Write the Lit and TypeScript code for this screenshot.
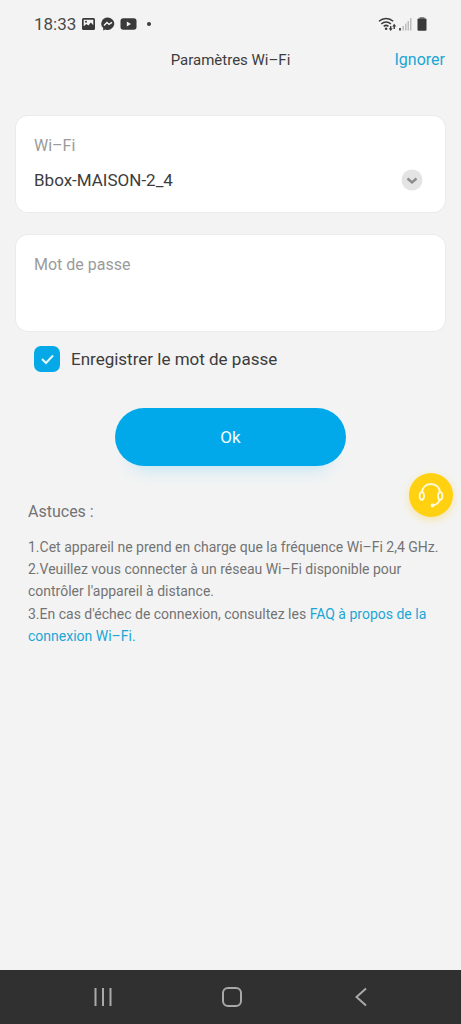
import { LitElement, html, css } from "lit";
import { customElement, state } from "lit/decorators.js";

@customElement("status-bar")
class StatusBar extends LitElement {
  static styles = css`
    :host {
      display: flex;
      align-items: center;
      justify-content: space-between;
      height: 40px;
      padding: 8px 31px 0 34px;
      color: #4a4a4a;
    }
    .group {
      display: flex;
      align-items: center;
      gap: 5px;
    }
    .signals {
      gap: 2px;
    }
    .time {
      font-size: 17px;
      line-height: 20px;
    }
    svg {
      display: block;
    }
  `;

  render() {
    return html`
      <div class="group">
        <span class="time">18:33</span>
        <svg width="15" height="14" viewBox="0 0 15 14" aria-hidden="true">
          <rect x="1" y="1" width="13" height="12" rx="1.5" fill="#3a3a3a" />
          <path d="M2.7 2.7h9.6v5.6L9.8 5.6 7.4 8.4 5.4 7 2.7 9.3z" fill="#f3f3f3" />
          <circle cx="5" cy="4.7" r="1" fill="#3a3a3a" />
        </svg>
        <svg width="14" height="14" viewBox="0 0 14 14" aria-hidden="true">
          <path d="M7 .5a6.4 6.2 0 0 0-4.8 10.6v2.4l2-1.1A6.5 6.2 0 1 0 7 .5z" fill="#3a3a3a" />
          <path d="M3 8.5l3-3 2 1.9 3-2" fill="none" stroke="#f3f3f3" stroke-width="1.4" />
        </svg>
        <svg width="17" height="14" viewBox="0 0 17 14" aria-hidden="true">
          <rect x=".5" y="1.2" width="16" height="11.6" rx="2.8" fill="#3a3a3a" />
          <path d="M6.8 4.6v4.8L11 7z" fill="#f3f3f3" />
        </svg>
        <svg width="14" height="14" viewBox="0 0 14 14" aria-hidden="true">
          <circle cx="7" cy="7" r="2" fill="#3a3a3a" />
        </svg>
      </div>
      <div class="group signals">
        <svg width="19" height="16" viewBox="0 0 19 16" aria-hidden="true">
          <g fill="none" stroke="#3a3a3a" stroke-width="1.5">
            <path d="M1 5.2a10.5 10.5 0 0 1 14.2 0" />
            <path d="M3.3 8a7 7 0 0 1 9.6 0" />
            <path d="M5.7 10.4a3.7 3.7 0 0 1 4.8 0" />
          </g>
          <circle cx="8.1" cy="12.8" r="1.3" fill="#3a3a3a" />
          <path d="M12 10v2.300h-1.300l2 2.700 2-2.700h-1.300V10zM15.500 13v-2.500h-1.300l2-2.700 2 2.700h-1.300V13z" fill="#3a3a3a" />
        </svg>
        <svg width="13" height="14" viewBox="0 0 13 14" aria-hidden="true">
          <rect x="0" y="11" width="2" height="2.5" fill="#555" />
          <path d="M3.5 9H5v4.5H3.5zM6 6.5h1.5v7H6zM8.5 4H10v9.5H8.5zM11 1h1.5v12.5H11z" fill="#bdbdbd" />
        </svg>
        <svg width="16" height="14" viewBox="0 0 16 14" aria-hidden="true">
          <path d="M5.500 0h5v2h-5z" fill="#8a8a8a" />
          <rect x="3.5" y="1.5" width="9" height="12.3" rx="1" fill="#3a3a3a" />
        </svg>
      </div>
    `;
  }
}

@customElement("system-nav")
class SystemNav extends LitElement {
  static styles = css`
    :host {
      display: grid;
      grid-template-columns: repeat(3, 1fr);
      justify-items: center;
      align-items: center;
      height: 54px;
      padding: 0 36px 0 38px;
      background: #303030;
    }
    button {
      display: flex;
      justify-content: center;
      width: 48px;
      padding: 8px;
      border: 0;
      background: none;
    }
    svg {
      fill: none;
      stroke: #a9a9a9;
      stroke-width: 2;
    }
  `;

  render() {
    return html`
      <button aria-label="Applications récentes">
        <svg width="22" height="22" viewBox="0 0 22 22"><path d="M3.5 2v18M11 2v18M18.500 2v18" /></svg>
      </button>
      <button aria-label="Accueil">
        <svg width="22" height="22" viewBox="0 0 22 22">
          <rect x="2" y="2" width="18" height="18" rx="5" />
        </svg>
      </button>
      <button aria-label="Retour">
        <svg width="22" height="22" viewBox="0 0 22 22"><path d="M16 2.5L6.5 11l9.5 8.5" /></svg>
      </button>
    `;
  }
}

@customElement("app-root")
class AppRoot extends LitElement {
  static styles = css`
    :host {
      display: flex;
      flex-direction: column;
      position: relative;
      min-height: 100vh;
      background: #f3f3f3;
      font-family: Roboto, "Liberation Sans", sans-serif;
      color: #3c3c3c;
    }
    * {
      box-sizing: border-box;
    }
    header {
      display: grid;
      grid-template-columns: 1fr auto 1fr;
      align-items: center;
      height: 40px;
      padding: 0 16px;
    }
    h1 {
      grid-column: 2;
      margin: 0;
      font-size: 15px;
      line-height: 20px;
      font-weight: 400;
    }
    a {
      color: #1ba6d6;
      text-decoration: none;
    }
    .skip {
      justify-self: end;
      font-size: 16px;
      line-height: 20px;
    }
    main {
      flex: 1;
    }
    form {
      display: flex;
      flex-direction: column;
      gap: 23px;
      padding: 36px 16px 0;
    }
    .card {
      display: flex;
      flex-direction: column;
      gap: 10px;
      height: 96px;
      padding: 18px;
      border-radius: 12px;
      background: #fff;
      box-shadow: 0 0 0 1px #ebebeb;
    }
    .card label {
      font-size: 16px;
      line-height: 24px;
      color: #9b9b9b;
    }
    .picker {
      display: grid;
      align-items: center;
    }
    .picker > * {
      grid-area: 1 / 1;
    }
    .chevron {
      justify-self: end;
      margin-right: 4px;
      pointer-events: none;
    }
    select,
    .card input {
      width: 100%;
      height: 24px;
      margin: 0;
      padding: 0;
      border: 0;
      outline: 0;
      appearance: none;
      background: none;
      font: inherit;
      font-size: 17px;
      line-height: 24px;
      color: #3c3c3c;
    }
    .remember {
      display: flex;
      align-items: center;
      gap: 11px;
      margin: -8px 0 0 18px;
      font-size: 17px;
      line-height: 26px;
    }
    .box {
      display: grid;
    }
    .box > * {
      grid-area: 1 / 1;
    }
    .box input {
      width: 26px;
      height: 26px;
      margin: 0;
      appearance: none;
      border-radius: 7px;
      background: #fff;
    }
    .box input:checked {
      background: #05a9e8;
    }
    .box svg {
      pointer-events: none;
    }
    .ok {
      align-self: center;
      width: 54%;
      height: 58px;
      margin-top: 13px;
      border: 0;
      border-radius: 29px;
      background: #02a9ea;
      box-shadow: 0 18px 18px -16px #b9e3f4;
      color: #f3fbff;
      font: inherit;
      font-size: 17px;
    }
    .tips {
      padding: 34px 16px 34px 28px;
      color: #737373;
      font-size: 14px;
      line-height: 22px;
    }
    h2 {
      margin: 0 0 12px;
      font-size: 16px;
      line-height: 24px;
      font-weight: 400;
    }
    p {
      margin: 0;
    }
    .tips p:last-child {
      margin-top: 1px;
    }
    .support {
      position: absolute;
      top: 473px;
      right: 8px;
      display: grid;
      place-items: center;
      width: 44px;
      height: 44px;
      padding: 0;
      border: 0;
      border-radius: 50%;
      background: #ffd110;
      box-shadow: 0 3px 8px #f6e3a6;
    }
  `;

  @state() private remember = true;

  render() {
    return html`
      <status-bar></status-bar>
      <header>
        <h1>Paramètres Wi–Fi</h1>
        <a class="skip" href="#">Ignorer</a>
      </header>
      <main>
        <form @submit=${(e: Event) => e.preventDefault()}>
          <div class="card">
            <label for="network">Wi–Fi</label>
            <div class="picker">
              <select id="network">
                <option>Bbox-MAISON-2_4</option>
              </select>
              <svg class="chevron" width="22" height="22" viewBox="0 0 22 22" aria-hidden="true">
                <circle cx="11" cy="11" r="10.5" fill="#e4e4e4" />
                <path d="M6.5 9.5l4.5 4 4.5-4" fill="none" stroke="#8c8c8c" stroke-width="2.4" />
              </svg>
            </div>
          </div>
          <div class="card">
            <label for="password">Mot de passe</label>
            <input id="password" type="password" autocomplete="off" />
          </div>
          <label class="remember">
            <span class="box">
              <input
                type="checkbox"
                .checked=${this.remember}
                @change=${(e: Event) => (this.remember = (e.target as HTMLInputElement).checked)}
              />
              <svg width="26" height="26" viewBox="0 0 26 26" aria-hidden="true">
                <path d="M8 13l4 4 7-7.5" fill="none" stroke="#e6f8ff" stroke-width="2" />
              </svg>
            </span>
            Enregistrer le mot de passe
          </label>
          <button class="ok">Ok</button>
        </form>
        <section class="tips">
          <h2>Astuces :</h2>
          <p>1.Cet appareil ne prend en charge que la fréquence Wi–Fi 2,4 GHz.</p>
          <p>2.Veuillez vous connecter à un réseau Wi–Fi disponible pour contrôler l'appareil à distance.</p>
          <p>
            3.En cas d'échec de connexion, consultez les
            <a href="#">FAQ à propos de la connexion Wi–Fi.</a>
          </p>
        </section>
      </main>
      <button class="support" aria-label="Assistance">
        <svg width="28" height="28" viewBox="0 0 28 28" fill="none" stroke="#fffbe0" stroke-width="1.8" aria-hidden="true">
          <path d="M5 11.500C5 6.500 9 3 14 3s9 3.500 9 8.500" />
          <ellipse cx="4.800" cy="15" rx="2.200" ry="3.800" />
          <ellipse cx="23.200" cy="15" rx="2.200" ry="3.800" />
          <path d="M22.500 19c-.8 3-3 4.500-6 5.200" />
          <circle cx="15.500" cy="24.500" r="1" fill="#fffbe0" />
        </svg>
      </button>
      <system-nav></system-nav>
    `;
  }
}
